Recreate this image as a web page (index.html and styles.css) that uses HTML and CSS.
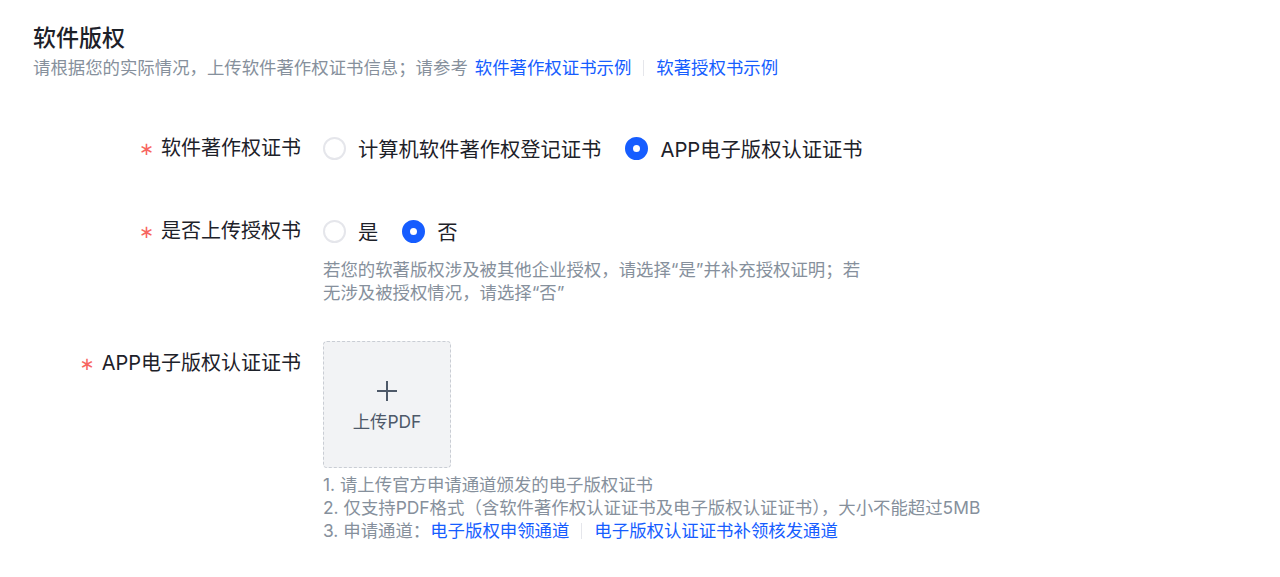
FILE: index.html
```html
<!DOCTYPE html>
<html lang="zh">
<head>
  <meta charset="UTF-8">
  <title>软件版权</title>
  <link rel="stylesheet" href="styles.css">
</head>
<body>
  <div class="container">
    <h1 class="title">软件版权</h1>
    <p class="subtitle">
      请根据您的实际情况，上传软件著作权证书信息；请参考
      <a class="link" href="#">软件著作权证书示例</a><span class="divider"></span><a class="link" href="#">软著授权书示例</a>
    </p>

    <div class="form">
      <div class="form-item item-cert">
        <label class="label"><span class="required">∗</span>软件著作权证书</label>
        <div class="control">
          <div class="radio-group">
            <span class="radio"><span class="radio-dot"></span>计算机软件著作权登记证书</span>
            <span class="radio checked"><span class="radio-dot"></span>APP电子版权认证证书</span>
          </div>
        </div>
      </div>

      <div class="form-item item-auth">
        <label class="label"><span class="required">∗</span>是否上传授权书</label>
        <div class="control">
          <div class="radio-group">
            <span class="radio"><span class="radio-dot"></span>是</span>
            <span class="radio checked"><span class="radio-dot"></span>否</span>
          </div>
          <p class="help">若您的软著版权涉及被其他企业授权，请选择“是”并补充授权证明；若无涉及被授权情况，请选择“否”</p>
        </div>
      </div>

      <div class="form-item item-upload">
        <label class="label label-top"><span class="required">∗</span>APP电子版权认证证书</label>
        <div class="control">
          <div class="upload">
            <svg class="upload-icon" width="22" height="22" viewBox="0 0 22 22">
              <path d="M11 1v20M1 11h20" stroke="#4e5969" stroke-width="2" fill="none"/>
            </svg>
            <span class="upload-text">上传PDF</span>
          </div>
          <ol class="notes">
            <li>1. 请上传官方申请通道颁发的电子版权证书</li>
            <li>2. 仅支持PDF格式（含软件著作权认证证书及电子版权认证证书），大小不能超过5MB</li>
            <li>3. 申请通道：<a class="link" href="#">电子版权申领通道</a><span class="divider"></span><a class="link" href="#">电子版权认证证书补领核发通道</a></li>
          </ol>
        </div>
      </div>
    </div>
  </div>
</body>
</html>
```

FILE: styles.css
```css
body {
  margin: 0;
  background: #fff;
  font-family: "Inter", "Noto Sans CJK SC", sans-serif;
  color: #1d2129;
}

.container {
  padding: 23px 33px 0;
}

.title {
  margin: 0;
  font-size: 23px;
  line-height: 30px;
  font-weight: 500;
}

.subtitle {
  margin: 3px 0 0;
  font-size: 17.4px;
  line-height: 23px;
  color: #86909c;
  display: flex;
  align-items: center;
}

.link {
  color: #165dff;
  text-decoration: none;
}

.subtitle .link:first-of-type {
  margin-left: 7px;
}

.divider {
  display: inline-block;
  width: 1px;
  height: 16px;
  background: #e5e6eb;
  margin: 0 12px;
  vertical-align: middle;
}

.form {
  margin-top: 53px;
}

.form-item {
  display: flex;
  align-items: flex-start;
}

.item-auth {
  margin-top: 50px;
}

.item-upload {
  margin-top: 37px;
}

.label {
  width: 268px;
  flex-shrink: 0;
  padding-right: 22px;
  box-sizing: content-box;
  text-align: right;
  font-size: 20px;
  line-height: 32px;
}

.label-top {
  padding-top: 6px;
}

.required {
  font-family: "DejaVu Sans", sans-serif;
  color: #f76560;
  margin-right: 7px;
  font-size: 18px;
}

.radio-group {
  display: flex;
  align-items: center;
  gap: 24px;
  height: 32px;
}

.radio {
  display: flex;
  align-items: center;
  gap: 12px;
  font-size: 20.3px;
}

.radio-dot {
  width: 23px;
  height: 23px;
  box-sizing: border-box;
  border: 2px solid #e5e6eb;
  border-radius: 50%;
  background: #fff;
}

.radio.checked .radio-dot {
  border: 8px solid #165dff;
}

.help {
  margin: 11px 0 0;
  max-width: 540px;
  font-size: 17.4px;
  line-height: 23px;
  color: #86909c;
}

.upload {
  width: 128px;
  height: 127px;
  box-sizing: border-box;
  border: 1px dashed #c9cdd4;
  border-radius: 4px;
  background: #f2f3f5;
  display: flex;
  flex-direction: column;
  align-items: center;
  justify-content: center;
  gap: 8px;
}

.upload-icon {
  margin-top: 4px;
}

.upload-text {
  font-size: 17.4px;
  line-height: 23px;
  color: #4e5969;
}

.notes {
  list-style: none;
  margin: 5px 0 0;
  padding: 0;
  font-size: 17.4px;
  line-height: 23px;
  color: #86909c;
}

.notes li {
  display: flex;
  align-items: center;
}
```
